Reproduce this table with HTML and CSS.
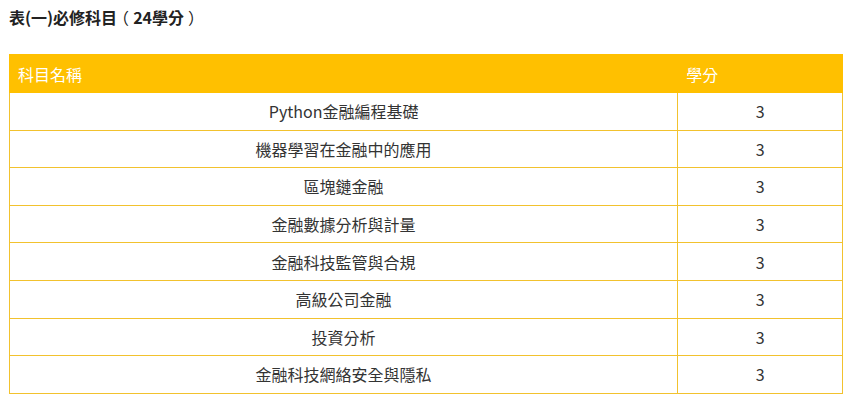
FILE: index.html
```html
<!DOCTYPE html>
<html lang="zh-Hant">
<head>
<meta charset="utf-8">
<link rel="stylesheet" href="styles.css">
</head>
<body>
<div class="page">
  <h3 class="title">表(一)必修科目<span class="po">（</span>24學分<span class="pc">）</span></h3>
  <table class="courses">
    <colgroup><col class="c-name"><col class="c-credit"></colgroup>
    <thead>
      <tr><th>科目名稱</th><th>學分</th></tr>
    </thead>
    <tbody>
      <tr><td>Python金融編程基礎</td><td>3</td></tr>
      <tr><td>機器學習在金融中的應用</td><td>3</td></tr>
      <tr><td>區塊鏈金融</td><td>3</td></tr>
      <tr><td>金融數據分析與計量</td><td>3</td></tr>
      <tr><td>金融科技監管與合規</td><td>3</td></tr>
      <tr><td>高級公司金融</td><td>3</td></tr>
      <tr><td>投資分析</td><td>3</td></tr>
      <tr><td>金融科技網絡安全與隱私</td><td>3</td></tr>
    </tbody>
  </table>
</div>
</body>
</html>
```
FILE: styles.css
```css
html, body {
  margin: 0;
  padding: 0;
  background: #fff;
}
body {
  font-family: "Noto Sans CJK TC", "Noto Sans", sans-serif;
  color: #333;
}
.page {
  padding: 7px 5px 0 9px;
}
.title {
  margin: 0;
  font-size: 16px;
  font-weight: bold;
  line-height: 21px;
  color: #222;
}
.po,
.pc {
  font-weight: normal;
  font-feature-settings: "halt" 1;
}
.po { padding: 0 4px 0 4px; }
.pc { padding: 0 0 0 4px; }
.courses {
  margin-top: 26px;
  width: 834px;
  border-collapse: collapse;
  font-size: 16px;
}
.c-name { width: 669px; }
.c-credit { width: 165px; }
.courses th {
  background: #ffc000;
  color: #fff;
  font-weight: normal;
  text-align: left;
  height: 38px;
  padding: 0 8px;
  border: 1px solid #ffc000;
  box-sizing: border-box;
}
.courses td {
  height: 37.6px;
  padding: 0 8px;
  text-align: center;
  border: 1px solid #f2c22e;
  box-sizing: border-box;
  color: #333;
}
```
